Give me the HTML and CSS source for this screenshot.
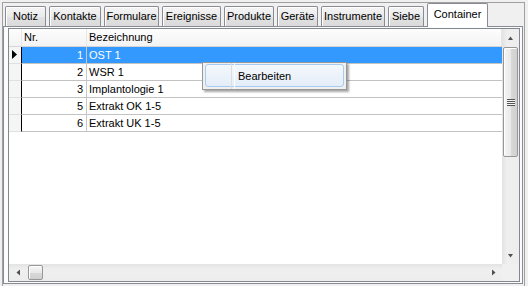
FILE: index.html
```html
<!DOCTYPE html>
<html lang="de">
<head>
  <meta charset="UTF-8">
  <title>Container</title>
  <link rel="stylesheet" href="styles.css">
</head>
<body>
  <div class="frame">
      <div class="tabs">
          <div class="tab t-notiz">Notiz</div>
          <div class="tab t-kontakte">Kontakte</div>
          <div class="tab t-formulare">Formulare</div>
          <div class="tab t-ereignisse">Ereignisse</div>
          <div class="tab t-produkte">Produkte</div>
          <div class="tab t-geraete">Geräte</div>
          <div class="tab t-instrumente">Instrumente</div>
          <div class="tab t-siebe">Siebe</div>
          <div class="tab tab-active t-container">Container</div>
      </div>

      <div class="page">
          <div class="grid">
              <div class="view">
                  <div class="head">
                      <div class="cell c-ind"></div>
                      <div class="cell c-nr">Nr.</div>
                      <div class="cell c-name">Bezeichnung</div>
                  </div>
                  <div class="row sel">
                      <div class="cell c-ind">
                          <svg class="pointer" width="6" height="9" viewBox="0 0 6 9"><polygon points="0,0 5,4.5 0,9" fill="#000"/></svg>
                      </div>
                      <div class="cell c-nr">1</div>
                      <div class="cell c-name">OST 1</div>
                  </div>
                  <div class="row">
                      <div class="cell c-ind"></div>
                      <div class="cell c-nr">2</div>
                      <div class="cell c-name">WSR 1</div>
                  </div>
                  <div class="row">
                      <div class="cell c-ind"></div>
                      <div class="cell c-nr">3</div>
                      <div class="cell c-name">Implantologie 1</div>
                  </div>
                  <div class="row">
                      <div class="cell c-ind"></div>
                      <div class="cell c-nr">5</div>
                      <div class="cell c-name">Extrakt OK 1-5</div>
                  </div>
                  <div class="row">
                      <div class="cell c-ind"></div>
                      <div class="cell c-nr">6</div>
                      <div class="cell c-name">Extrakt UK 1-5</div>
                  </div>
              </div>

              <div class="vscroll">
                  <div class="sbtn">
                      <svg width="7" height="4" viewBox="0 0 7 4"><polygon points="1,4 3.5,0.5 6,4" fill="#505050"/></svg>
                  </div>
                  <div class="vthumb"><div class="grip"></div></div>
                  <div class="sbtn sbtn-end">
                      <svg width="7" height="4" viewBox="0 0 7 4"><polygon points="1,0 6,0 3.5,3.5" fill="#505050"/></svg>
                  </div>
              </div>

              <div class="hscroll">
                  <div class="sbtn">
                      <svg width="4" height="7" viewBox="0 0 4 7"><polygon points="4,0.5 4,6.5 0.5,3.5" fill="#505050"/></svg>
                  </div>
                  <div class="hthumb"></div>
                  <div class="sbtn sbtn-end">
                      <svg width="4" height="7" viewBox="0 0 4 7"><polygon points="0,0.5 0,6.5 3.5,3.5" fill="#505050"/></svg>
                  </div>
              </div>

              <div class="corner"></div>
          </div>
      </div>
  </div>

  <div class="menu">
      <div class="menu-item">Bearbeiten</div>
  </div>
</body>
</html>
```

FILE: styles.css
```css
* {
    margin: 0;
    padding: 0;
    box-sizing: border-box;
}

body {
    width: 528px;
    height: 286px;
    overflow: hidden;
    position: relative;
    background: #f0f0f0;
    font-family: 'Liberation Sans', Arial, sans-serif;
    font-size: 11px;
    color: #000;
}

.frame {
    margin: 2px 0 0 2px;
    width: 523px;
    height: 284px;
    border: 1px solid #a0a0a0;
    border-bottom: none;
}

/* tab strip */
.tabs {
    display: flex;
    align-items: flex-end;
    gap: 3px;
    height: 23px;
    padding-left: 2px;
}

.tab {
    height: 20px;
    border: 1px solid #898c95;
    border-bottom: none;
    border-radius: 2px 2px 0 0;
    background: linear-gradient(#f4f4f4, #ebebeb 50%, #e2e2e2 51%, #dadada);
    box-shadow: inset 1px 1px 0 #fff;
    text-align: center;
    line-height: 19px;
    white-space: nowrap;
}

.tab-active {
    position: relative;
    z-index: 1;
    height: 24px;
    margin-bottom: -1px;
    background: #fff;
    box-shadow: none;
    line-height: 20px;
}

.t-notiz { width: 41px; }
.t-kontakte { width: 52px; }
.t-formulare { width: 55px; }
.t-ereignisse { width: 59px; }
.t-produkte { width: 50px; }
.t-geraete { width: 41px; }
.t-instrumente { width: 64px; }
.t-siebe { width: 36px; }
.t-container { width: 61px; }

.page {
    width: 520px;
    height: 258px;
    border: 1px solid #898c95;
    background: #fcfcfc;
    padding: 1px 2px 1px 4px;
}

/* data grid */
.grid {
    width: 512px;
    height: 254px;
    border: 1px solid #828790;
    background: #fff;
    display: grid;
    grid-template-columns: 1fr 17px;
    grid-template-rows: 1fr 17px;
}

.view {
    overflow: hidden;
}

.head,
.row {
    display: flex;
}

.cell {
    white-space: nowrap;
    overflow: hidden;
}

.head {
    height: 18px;
    line-height: 16px;
    background: linear-gradient(#fdfdfd, #f3f3f3);
    border-bottom: 1px solid #d5d5d5;
}

.head .cell {
    border-right: 1px solid #e6e6e6;
}

.head .c-nr {
    text-align: left;
    padding: 0 0 0 2px;
}

.c-ind {
    width: 13px;
}

.c-nr {
    width: 65px;
    text-align: right;
    padding-right: 3px;
}

.c-name {
    flex: 1;
    padding-left: 2px;
}

.row {
    height: 17px;
    line-height: 17px;
}

.row .cell {
    border-bottom: 1px solid #c3c3c3;
}

.row .c-ind {
    background: #f5f5f5;
    border-right: 1px solid #000;
    border-bottom-color: #e0e0e0;
}

.row .c-nr {
    border-right: 1px solid #c8c8c8;
}

.row.sel .c-nr,
.row.sel .c-name {
    background: #3399ff;
    color: #fff;
}

.pointer {
    display: block;
    margin: 3px 0 0 3px;
}

/* scrollbars */
.vscroll,
.hscroll {
    display: flex;
    background: #ebebeb;
}

.vscroll {
    flex-direction: column;
    align-items: center;
    background: linear-gradient(to right, #e3e3e3, #efefef 30%, #ededed);
}

.hscroll {
    align-items: center;
    background: linear-gradient(#e3e3e3, #efefef 30%, #ededed);
}

.sbtn {
    width: 17px;
    height: 17px;
    display: flex;
    align-items: center;
    justify-content: center;
    flex: none;
}

.sbtn-end {
    margin-top: auto;
}

.hscroll .sbtn-end {
    margin: 0 0 0 auto;
}

.vthumb {
    width: 15px;
    height: 110px;
    margin-top: 1px;
    border: 1px solid #979797;
    border-radius: 2px;
    background: linear-gradient(to right, #f6f6f6, #e9e9e9 50%, #d9d9d9 51%, #d0d0d0);
    box-shadow: inset 1px 1px 0 #fff;
    display: flex;
    align-items: center;
    justify-content: center;
}

.grip {
    width: 8px;
    height: 7px;
    background: repeating-linear-gradient(#555 0, #555 1px, #f4f4f4 1px, #f4f4f4 2px);
}

.hthumb {
    width: 15px;
    height: 15px;
    margin-left: 2px;
    border: 1px solid #979797;
    border-radius: 2px;
    background: linear-gradient(#f6f6f6, #e9e9e9 50%, #d9d9d9 51%, #d0d0d0);
    box-shadow: inset 1px 1px 0 #fff;
}

.corner {
    background: #f0f0f0;
}

/* context menu */
.menu {
    position: absolute;
    left: 202px;
    top: 62px;
    width: 145px;
    height: 28px;
    padding: 1px 2px 2px;
    border: 1px solid #979797;
    background: #f0f0f0;
    box-shadow: 2px 2px 2px rgba(0, 0, 0, 0.35);
}

.menu::before {
    content: '';
    position: absolute;
    z-index: 1;
    left: 28px;
    top: 0;
    bottom: 0;
    width: 2px;
    border-left: 1px solid #dcdde0;
    border-right: 1px solid #fff;
}

.menu-item {
    position: relative;
    height: 23px;
    line-height: 22px;
    padding-left: 32px;
    border: 1px solid #a8cbf1;
    border-radius: 3px;
    background: linear-gradient(#f4f8fc, #e4edf8);
}
```
